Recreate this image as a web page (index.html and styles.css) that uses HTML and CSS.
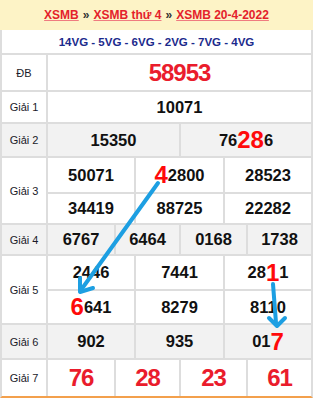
FILE: index.html
```html
<!DOCTYPE html>
<html lang="vi">
<head>
<meta charset="utf-8">
<title>XSMB 20-4-2022</title>
<link rel="stylesheet" href="styles.css">
</head>
<body>
<div class="page">
  <div class="title">
    <a href="#">XSMB</a> <span class="sep">»</span> <a href="#">XSMB thứ 4</a> <span class="sep">»</span> <a href="#">XSMB 20-4-2022</a>
  </div>
  <div class="board">
    <div class="vg">14VG - 5VG - 6VG - 2VG - 7VG - 4VG</div>

    <div class="row r-db">
      <div class="label">ĐB</div>
      <div class="cells cols-1"><div class="cell db">58953</div></div>
    </div>

    <div class="row r-g1">
      <div class="label">Giải 1</div>
      <div class="cells cols-1"><div class="cell">10071</div></div>
    </div>

    <div class="row r-g2 alt">
      <div class="label">Giải 2</div>
      <div class="cells cols-2">
        <div class="cell">15350</div>
        <div class="cell">76<span class="hl">28</span>6</div>
      </div>
    </div>

    <div class="row r-g3">
      <div class="label">Giải 3</div>
      <div class="cells cols-3 rows-g3">
        <div class="cell">50071</div>
        <div class="cell"><span class="hl">4</span>2800</div>
        <div class="cell">28523</div>
        <div class="cell">34419</div>
        <div class="cell">88725</div>
        <div class="cell">22282</div>
      </div>
    </div>

    <div class="row r-g4 alt">
      <div class="label">Giải 4</div>
      <div class="cells cols-4">
        <div class="cell">6767</div>
        <div class="cell">6464</div>
        <div class="cell">0168</div>
        <div class="cell">1738</div>
      </div>
    </div>

    <div class="row r-g5">
      <div class="label">Giải 5</div>
      <div class="cells cols-3 rows-g5">
        <div class="cell">2446</div>
        <div class="cell">7441</div>
        <div class="cell">28<span class="hl">1</span>1</div>
        <div class="cell"><span class="hl">6</span>641</div>
        <div class="cell">8279</div>
        <div class="cell">8110</div>
      </div>
    </div>

    <div class="row r-g6 alt">
      <div class="label">Giải 6</div>
      <div class="cells cols-3">
        <div class="cell">902</div>
        <div class="cell">935</div>
        <div class="cell">01<span class="hl">7</span></div>
      </div>
    </div>

    <div class="row r-g7">
      <div class="label">Giải 7</div>
      <div class="cells cols-4">
        <div class="cell red">76</div>
        <div class="cell red">28</div>
        <div class="cell red">23</div>
        <div class="cell red">61</div>
      </div>
    </div>
  </div>

  <svg class="arrows" width="313" height="398" viewBox="0 0 313 398">
    <g fill="none" stroke="#1d9fe2" stroke-width="4" stroke-linecap="round" stroke-linejoin="round">
      <line x1="158" y1="183" x2="81" y2="290"/>
      <polyline points="93,288 80,292 80,278"/>
      <line x1="273" y1="284" x2="276" y2="323"/>
      <polyline points="269,318 277,326 285,318"/>
    </g>
  </svg>
</div>
</body>
</html>
```

FILE: styles.css
```css
html, body {
  margin: 0;
  padding: 0;
  background: #ffffff;
}

.page {
  position: relative;
  width: 313px;
  height: 398px;
  font-family: "Liberation Sans", Arial, sans-serif;
  color: #111;
}

.title {
  height: 30px;
  background: #fdf3c6;
  display: flex;
  align-items: center;
  justify-content: center;
  gap: 4px;
  font-size: 12px;
  font-weight: bold;
  white-space: nowrap;
}

.title a {
  color: #e4222b;
  text-decoration: underline;
  text-decoration-color: #ef7b80;
}

.title .sep {
  color: #333;
}

.board {
  border-left: 2px solid #dddddd;
  border-right: 2px solid #dddddd;
  border-bottom: 2px solid #f3a04c;
}

.vg {
  height: 23px;
  border-bottom: 2px solid #dddddd;
  display: flex;
  align-items: center;
  justify-content: center;
  font-size: 11.5px;
  font-weight: bold;
  color: #1b2a8c;
}

.row {
  display: flex;
  border-bottom: 2px solid #dddddd;
}

.row:last-child {
  border-bottom: none;
}

.label {
  width: 44px;
  flex: none;
  border-right: 2px solid #dddddd;
  display: flex;
  align-items: center;
  justify-content: center;
  font-size: 11px;
  color: #1a1a2a;
  background: #ffffff;
}

.cells {
  flex: 1;
  display: grid;
  gap: 2px;
  background: #dddddd;
}

.cols-1 { grid-template-columns: 1fr; }
.cols-2 { grid-template-columns: 131px 130px; }
.cols-3 { grid-template-columns: 86px 87px 86px; }
.cols-4 { grid-template-columns: 66px 63px 65px 63px; }

.cell {
  background: #ffffff;
  display: flex;
  align-items: center;
  justify-content: center;
  font-size: 16.5px;
  font-weight: bold;
  color: #111;
  white-space: nowrap;
}

.alt .label,
.alt .cell {
  background: #f2f2f2;
}

.r-db { height: 35px; }
.r-g1 { height: 30px; }
.r-g2 { height: 32px; }
.r-g3 { height: 65px; }
.r-g4 { height: 29px; }
.r-g5 { height: 67px; }
.r-g6 { height: 33px; }
.r-g7 { height: 36px; }

.rows-g3 { grid-template-rows: 34px 29px; }
.rows-g5 { grid-template-rows: 33px 32px; }

.db,
.red {
  font-size: 24px;
  letter-spacing: -1px;
  color: #ea1c2c;
}

.hl {
  font-size: 24px;
  color: #ff0a0a;
}

.arrows {
  position: absolute;
  left: 0;
  top: 0;
  pointer-events: none;
}
```
